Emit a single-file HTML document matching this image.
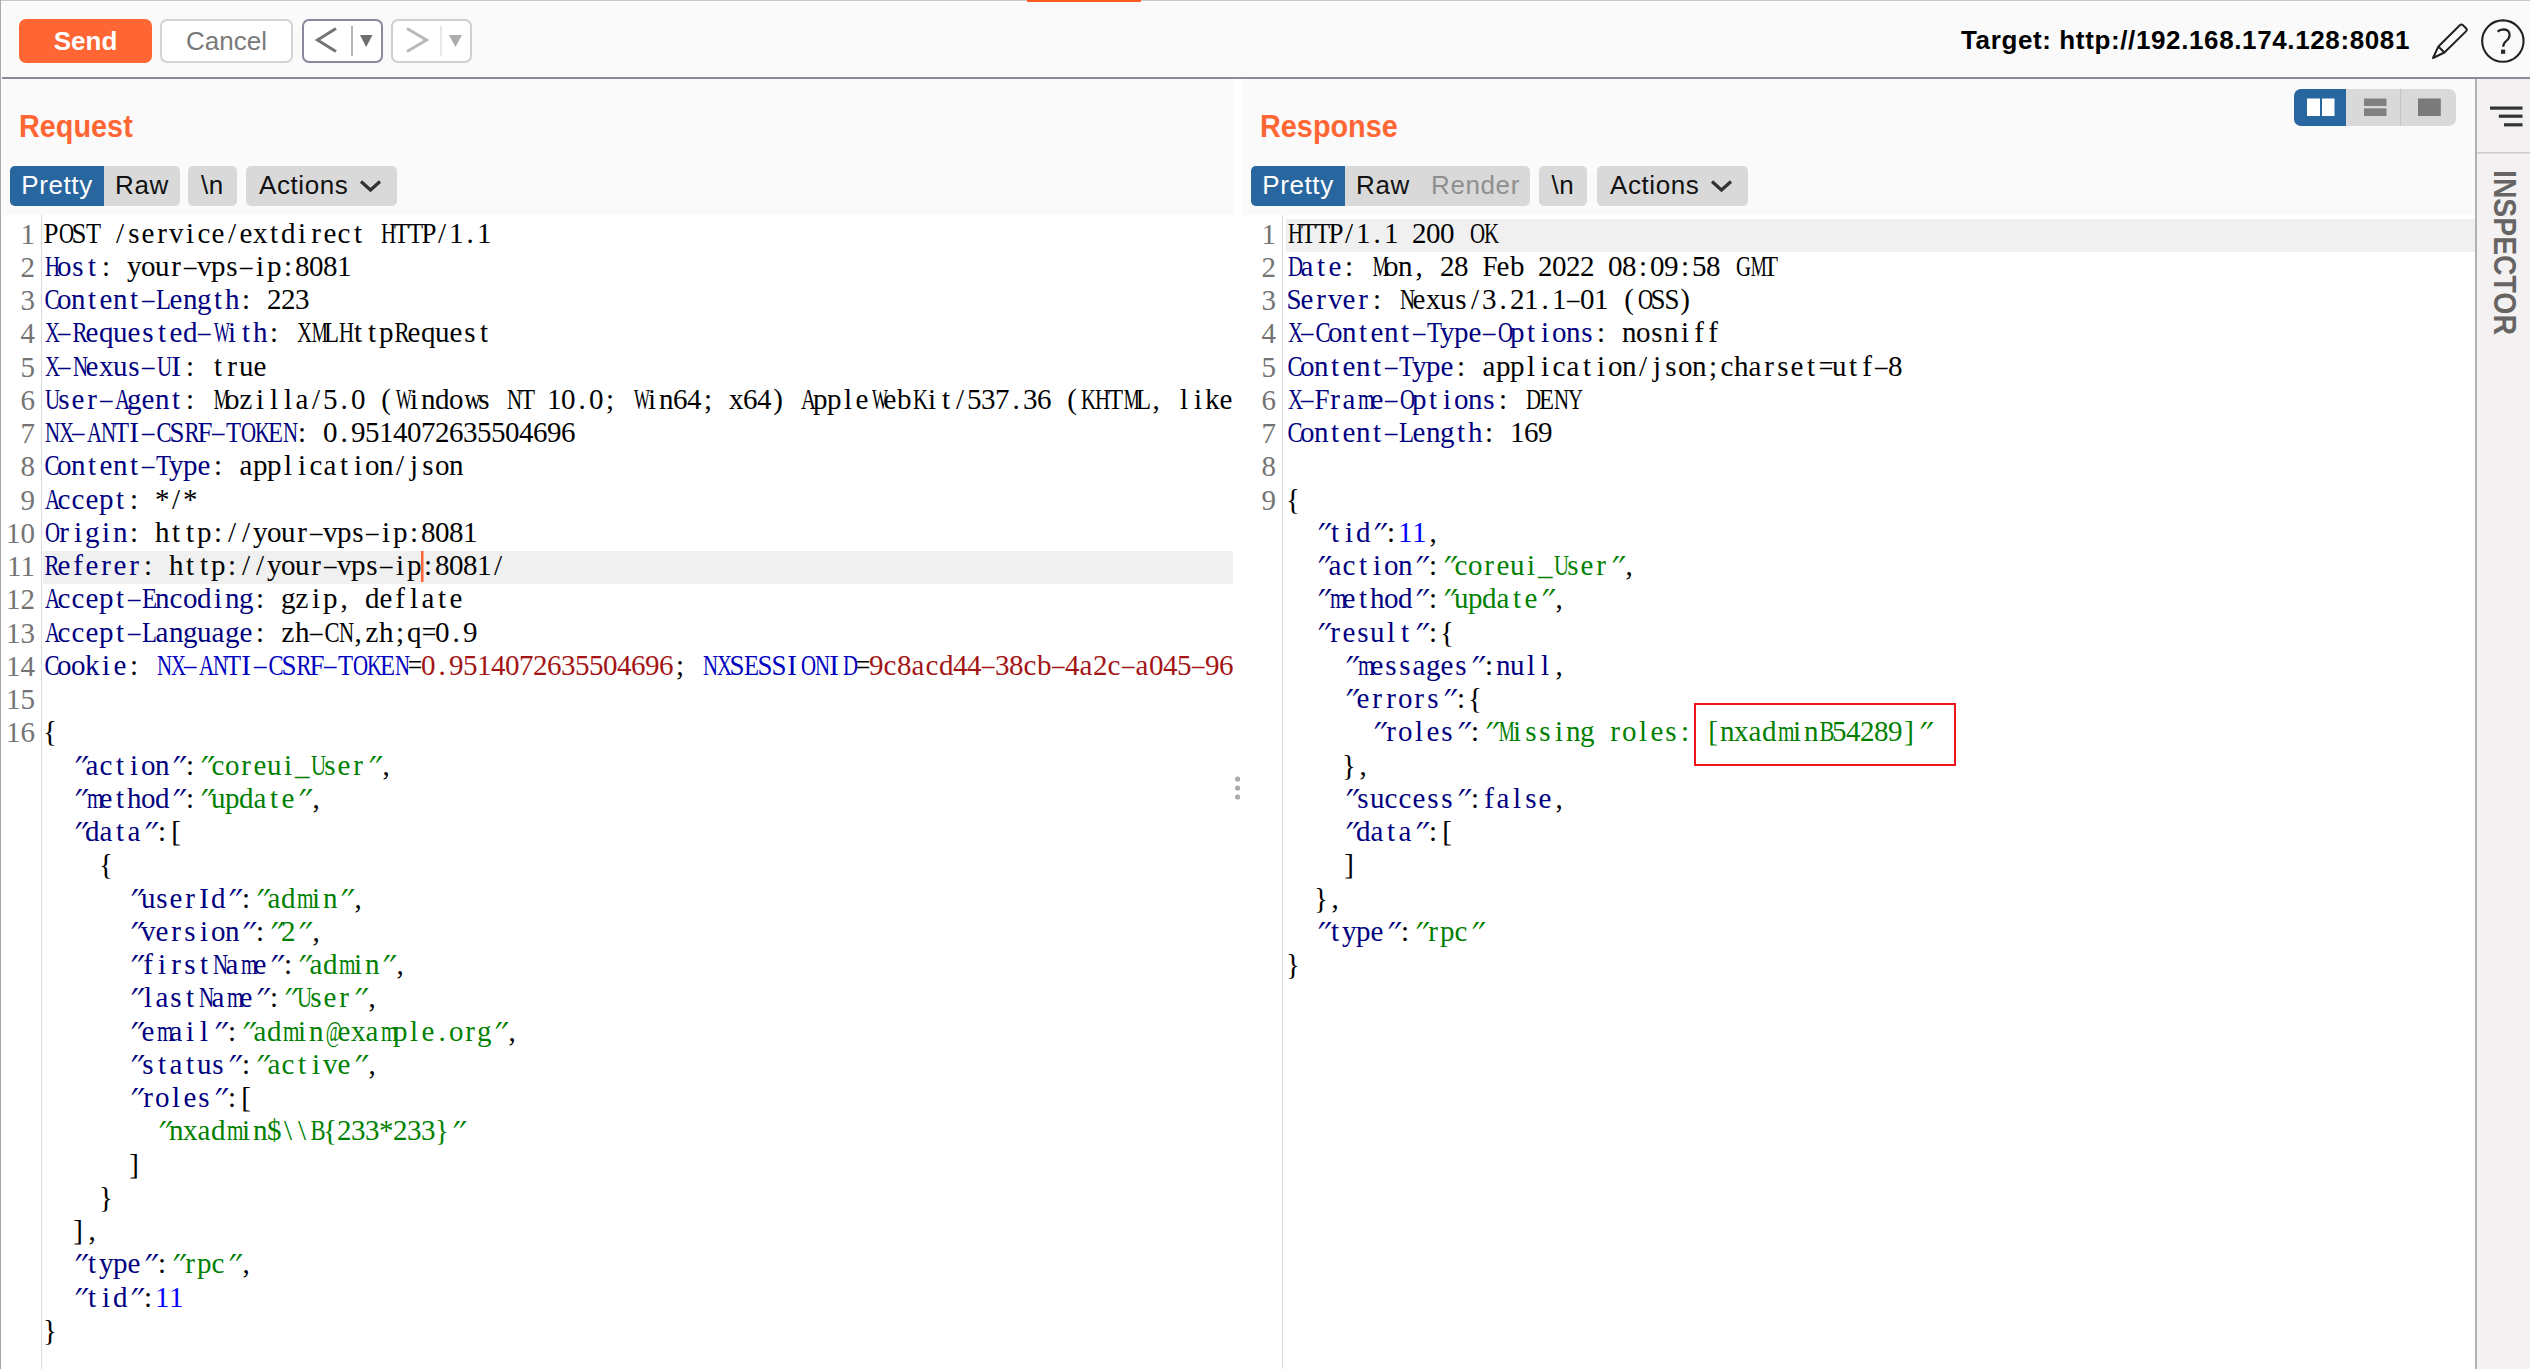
<!DOCTYPE html>
<html><head><meta charset="utf-8">
<style>
*{margin:0;padding:0;box-sizing:border-box}
html,body{width:2530px;height:1369px;overflow:hidden;background:#fafafa;font-family:"Liberation Sans",sans-serif}
.abs{position:absolute}
#topline{position:absolute;left:0;top:0;width:2530px;height:1px;background:#c3c8c8}
#toptab{position:absolute;left:1027px;top:0;width:114px;height:1.5px;background:#ff5a1f}
#leftline{position:absolute;left:0;top:0;width:1px;height:1369px;background:#a9a9a9;z-index:5}
#sep{position:absolute;left:2px;top:77px;width:2528px;height:2px;background:#8c899c}
.btn{position:absolute;border-radius:7px}
#send{left:19px;top:19px;width:133px;height:44px;background:#ff6633;color:#fff;font-weight:bold;font-size:26px;text-align:center;line-height:44px}
#cancel{left:160px;top:19px;width:133px;height:44px;background:#fff;border:2px solid #d3d3d3;color:#7a7a7a;font-size:26px;text-align:center;line-height:40px}
#back{left:302px;top:19px;width:81px;height:44px;background:#fff;border:2px solid #8a879e}
#fwd{left:391px;top:19px;width:81px;height:44px;background:#fff;border:2px solid #cfcfcf}
#target{position:absolute;left:1961px;top:25px;font-size:26px;font-weight:bold;color:#000;white-space:nowrap;letter-spacing:0.62px}
.panel{position:absolute;top:79px;background:#fafafa}
#reqp{left:2px;width:1231px;height:1290px}
#strip{position:absolute;left:1233px;top:79px;width:9px;height:136px;background:#fff}
#respp{left:1242px;width:1233px;height:1290px}
.title{position:absolute;top:108.5px;font-size:31px;font-weight:bold;color:#ff6633;transform-origin:0 0;transform:scaleX(0.93);line-height:36px}
.tabs{position:absolute;top:166px;height:40px;background:#d9d9d9;border-radius:5px;font-size:26px;color:#111;white-space:nowrap}
.tab{position:absolute;top:0;height:40px;line-height:38px;text-align:center;letter-spacing:0.6px}
.tab.act{background:#2866a0;color:#fff;border-radius:5px 0 0 5px}
.editor{position:absolute;top:215px;height:1154px;background:#fff;overflow:hidden}
.gut{position:absolute;top:0;width:1px;height:1154px;background:#dcdcdc}
.ln{position:absolute;left:0;right:0;height:33.25px;white-space:pre}
.ln.hl{background:#f0f0f0}
.t{position:absolute;left:0;top:-2px;font-family:"Liberation Serif",serif;font-size:29px;line-height:33.25px;color:#000;white-space:nowrap}
.t i{display:inline-block;width:14px;text-align:center;font-style:normal;vertical-align:top}
.t i.q{transform:translateX(1.5px) skewX(-22deg) scaleX(1.15)}
.no{position:absolute;width:33px;margin-top:-1px;text-align:right;font-family:"Liberation Serif",serif;font-size:29px;line-height:33.25px;color:#747474}
.h{color:#000080}
.c{color:#0000c0}
.v{color:#a31515}
.s{color:#008000}
.n{color:#0000ff}
#sidebar{position:absolute;left:2474.5px;top:79px;width:55.5px;height:1290px;background:#f3f1f2;border-left:2.5px solid #b5b0b0}
#redbox{position:absolute;left:1694px;top:703px;width:262px;height:63px;border:2.8px solid #f0141e}
</style></head><body>
<div id="topline"></div><div id="leftline"></div><div id="toptab"></div>
<div id="send" class="btn">Send</div>
<div id="cancel" class="btn">Cancel</div>
<div id="back" class="btn"></div>
<div id="fwd" class="btn"></div>
<svg class="abs" style="left:0;top:0" width="2530" height="80" viewBox="0 0 2530 80">
<polyline points="336,28.5 317.5,40 336,51.5" fill="none" stroke="#767676" stroke-width="3"/>
<rect x="351" y="26" width="2" height="30" fill="#b4b4b4"/>
<polygon points="360,35 372.5,35 366.2,47" fill="#6e6e6e"/>
<polyline points="407,28.5 426.5,40 407,51.5" fill="none" stroke="#b8b8b8" stroke-width="3"/>
<rect x="440.5" y="26" width="1" height="30" fill="#cfcfcf"/>
<polygon points="449,35 462,35 455.5,47" fill="#adadad"/>
<path d="M2433 58 L2438.4 46.5 L2459.8 25.2 Q2461.4 23.6 2463 25.2 L2466 28.2 Q2467.6 29.8 2466 31.4 L2444.4 52.5 Z M2438.4 46.5 L2444.4 52.5" fill="none" stroke="#222" stroke-width="2" stroke-linejoin="round"/>
<circle cx="2502.85" cy="41.05" r="20.7" fill="none" stroke="#222" stroke-width="2.1"/>
<path d="M2497.6 31.6 Q2499.8 29.4 2503.8 29.4 Q2509.6 29.8 2509.6 35 Q2509.6 38.3 2506.2 41 Q2503.2 43.6 2503.2 46.8" fill="none" stroke="#222" stroke-width="2.2"/>
<rect x="2501" y="49.6" width="4.2" height="4.2" fill="#2a2a2a"/>
</svg>
<div id="target">Target: http://192.168.174.128:8081</div>
<div id="sep"></div>

<div id="reqp" class="panel"></div>
<div id="strip"></div>
<div id="respp" class="panel"></div>

<div class="title" style="left:19px">Request</div>
<div class="tabs" style="left:10px;width:170px"><div class="tab act" style="left:0;width:94px">Pretty</div><div class="tab" style="left:94px;width:76px">Raw</div></div>
<div class="tabs" style="left:188px;width:49px"><div class="tab" style="left:0;width:49px">\n</div></div>
<div class="tabs" style="left:246px;width:151px"><div class="tab" style="left:13px;width:auto">Actions</div></div>

<div class="title" style="left:1259.5px">Response</div>
<div class="tabs" style="left:1251px;width:279px"><div class="tab act" style="left:0;width:94px">Pretty</div><div class="tab" style="left:94px;width:76px">Raw</div><div class="tab" style="left:170px;width:109px;color:#8f8f8f">Render</div></div>
<div class="tabs" style="left:1539px;width:48px"><div class="tab" style="left:0;width:48px">\n</div></div>
<div class="tabs" style="left:1597px;width:151px"><div class="tab" style="left:13px;width:auto">Actions</div></div>

<div class="editor" style="left:2px;width:1231px">
<div class="gut" style="left:39px"></div>
<div class="abs" style="left:0;top:-215px"><div class="no" style="top:218.50px">1</div>
<div class="no" style="top:251.75px">2</div>
<div class="no" style="top:285.00px">3</div>
<div class="no" style="top:318.25px">4</div>
<div class="no" style="top:351.50px">5</div>
<div class="no" style="top:384.75px">6</div>
<div class="no" style="top:418.00px">7</div>
<div class="no" style="top:451.25px">8</div>
<div class="no" style="top:484.50px">9</div>
<div class="no" style="top:517.75px">10</div>
<div class="no" style="top:551.00px">11</div>
<div class="no" style="top:584.25px">12</div>
<div class="no" style="top:617.50px">13</div>
<div class="no" style="top:650.75px">14</div>
<div class="no" style="top:684.00px">15</div>
<div class="no" style="top:717.25px">16</div></div>
<div class="abs" style="left:41px;top:-215px;width:1190px;height:1369px;overflow:hidden"><div class="ln" style="top:218.50px"><span class="t"><i style="transform:scaleX(0.93)">P</i><i style="transform:scaleX(0.72)">O</i><i style="transform:scaleX(0.93)">S</i><i style="transform:scaleX(0.85)">T</i><i style="width:14px"></i><i>/</i><i>s</i><i>e</i><i>r</i><i>v</i><i>i</i><i>c</i><i>e</i><i>/</i><i>e</i><i>x</i><i>t</i><i>d</i><i>i</i><i>r</i><i>e</i><i>c</i><i>t</i><i style="width:14px"></i><i style="transform:scaleX(0.72)">H</i><i style="transform:scaleX(0.85)">T</i><i style="transform:scaleX(0.85)">T</i><i style="transform:scaleX(0.93)">P</i><i>/</i><i>1</i><i>.</i><i>1</i></span></div>
<div class="ln" style="top:251.75px"><span class="t"><span class="h"><i style="transform:scaleX(0.72)">H</i><i>o</i><i>s</i><i>t</i></span><i>:</i><i style="width:14px"></i><i>y</i><i>o</i><i>u</i><i>r</i><i style="transform:scaleX(0.86)">–</i><i>v</i><i>p</i><i>s</i><i style="transform:scaleX(0.86)">–</i><i>i</i><i>p</i><i>:</i><i>8</i><i>0</i><i>8</i><i>1</i></span></div>
<div class="ln" style="top:285.00px"><span class="t"><span class="h"><i style="transform:scaleX(0.78)">C</i><i>o</i><i>n</i><i>t</i><i>e</i><i>n</i><i>t</i><i style="transform:scaleX(0.86)">–</i><i style="transform:scaleX(0.85)">L</i><i>e</i><i>n</i><i>g</i><i>t</i><i>h</i></span><i>:</i><i style="width:14px"></i><i>2</i><i>2</i><i>3</i></span></div>
<div class="ln" style="top:318.25px"><span class="t"><span class="h"><i style="transform:scaleX(0.72)">X</i><i style="transform:scaleX(0.86)">–</i><i style="transform:scaleX(0.78)">R</i><i>e</i><i>q</i><i>u</i><i>e</i><i>s</i><i>t</i><i>e</i><i>d</i><i style="transform:scaleX(0.86)">–</i><i style="transform:scaleX(0.58)">W</i><i>i</i><i>t</i><i>h</i></span><i>:</i><i style="width:14px"></i><i style="transform:scaleX(0.72)">X</i><i style="transform:scaleX(0.62)">M</i><i style="transform:scaleX(0.85)">L</i><i style="transform:scaleX(0.72)">H</i><i>t</i><i>t</i><i>p</i><i style="transform:scaleX(0.78)">R</i><i>e</i><i>q</i><i>u</i><i>e</i><i>s</i><i>t</i></span></div>
<div class="ln" style="top:351.50px"><span class="t"><span class="h"><i style="transform:scaleX(0.72)">X</i><i style="transform:scaleX(0.86)">–</i><i style="transform:scaleX(0.72)">N</i><i>e</i><i>x</i><i>u</i><i>s</i><i style="transform:scaleX(0.86)">–</i><i style="transform:scaleX(0.72)">U</i><i>I</i></span><i>:</i><i style="width:14px"></i><i>t</i><i>r</i><i>u</i><i>e</i></span></div>
<div class="ln" style="top:384.75px"><span class="t"><span class="h"><i style="transform:scaleX(0.72)">U</i><i>s</i><i>e</i><i>r</i><i style="transform:scaleX(0.86)">–</i><i style="transform:scaleX(0.72)">A</i><i>g</i><i>e</i><i>n</i><i>t</i></span><i>:</i><i style="width:14px"></i><i style="transform:scaleX(0.62)">M</i><i>o</i><i>z</i><i>i</i><i>l</i><i>l</i><i>a</i><i>/</i><i>5</i><i>.</i><i>0</i><i style="width:14px"></i><i>(</i><i style="transform:scaleX(0.58)">W</i><i>i</i><i>n</i><i>d</i><i>o</i><i style="transform:scaleX(0.79)">w</i><i>s</i><i style="width:14px"></i><i style="transform:scaleX(0.72)">N</i><i style="transform:scaleX(0.85)">T</i><i style="width:14px"></i><i>1</i><i>0</i><i>.</i><i>0</i><i>;</i><i style="width:14px"></i><i style="transform:scaleX(0.58)">W</i><i>i</i><i>n</i><i>6</i><i>4</i><i>;</i><i style="width:14px"></i><i>x</i><i>6</i><i>4</i><i>)</i><i style="width:14px"></i><i style="transform:scaleX(0.72)">A</i><i>p</i><i>p</i><i>l</i><i>e</i><i style="transform:scaleX(0.58)">W</i><i>e</i><i>b</i><i style="transform:scaleX(0.72)">K</i><i>i</i><i>t</i><i>/</i><i>5</i><i>3</i><i>7</i><i>.</i><i>3</i><i>6</i><i style="width:14px"></i><i>(</i><i style="transform:scaleX(0.72)">K</i><i style="transform:scaleX(0.72)">H</i><i style="transform:scaleX(0.85)">T</i><i style="transform:scaleX(0.62)">M</i><i style="transform:scaleX(0.85)">L</i><i>,</i><i style="width:14px"></i><i>l</i><i>i</i><i>k</i><i>e</i><i style="width:14px"></i><i style="transform:scaleX(0.72)">G</i><i>e</i><i>c</i><i>k</i><i>o</i><i>)</i><i style="width:14px"></i><i style="transform:scaleX(0.78)">C</i><i>h</i><i>r</i><i>o</i><i style="transform:scaleX(0.73)">m</i><i>e</i><i>/</i><i>9</i><i>8</i><i>.</i><i>0</i><i>.</i><i>4</i><i>7</i><i>5</i><i>8</i><i>.</i><i>1</i><i>0</i><i>2</i><i style="width:14px"></i><i style="transform:scaleX(0.93)">S</i><i>a</i><i>f</i><i>a</i><i>r</i><i>i</i><i>/</i><i>5</i><i>3</i><i>7</i><i>.</i><i>3</i><i>6</i></span></div>
<div class="ln" style="top:418.00px"><span class="t"><span class="h"><i style="transform:scaleX(0.72)">N</i><i style="transform:scaleX(0.72)">X</i><i style="transform:scaleX(0.86)">–</i><i style="transform:scaleX(0.72)">A</i><i style="transform:scaleX(0.72)">N</i><i style="transform:scaleX(0.85)">T</i><i>I</i><i style="transform:scaleX(0.86)">–</i><i style="transform:scaleX(0.78)">C</i><i style="transform:scaleX(0.93)">S</i><i style="transform:scaleX(0.78)">R</i><i style="transform:scaleX(0.93)">F</i><i style="transform:scaleX(0.86)">–</i><i style="transform:scaleX(0.85)">T</i><i style="transform:scaleX(0.72)">O</i><i style="transform:scaleX(0.72)">K</i><i style="transform:scaleX(0.85)">E</i><i style="transform:scaleX(0.72)">N</i></span><i>:</i><i style="width:14px"></i><i>0</i><i>.</i><i>9</i><i>5</i><i>1</i><i>4</i><i>0</i><i>7</i><i>2</i><i>6</i><i>3</i><i>5</i><i>5</i><i>0</i><i>4</i><i>6</i><i>9</i><i>6</i></span></div>
<div class="ln" style="top:451.25px"><span class="t"><span class="h"><i style="transform:scaleX(0.78)">C</i><i>o</i><i>n</i><i>t</i><i>e</i><i>n</i><i>t</i><i style="transform:scaleX(0.86)">–</i><i style="transform:scaleX(0.85)">T</i><i>y</i><i>p</i><i>e</i></span><i>:</i><i style="width:14px"></i><i>a</i><i>p</i><i>p</i><i>l</i><i>i</i><i>c</i><i>a</i><i>t</i><i>i</i><i>o</i><i>n</i><i>/</i><i>j</i><i>s</i><i>o</i><i>n</i></span></div>
<div class="ln" style="top:484.50px"><span class="t"><span class="h"><i style="transform:scaleX(0.72)">A</i><i>c</i><i>c</i><i>e</i><i>p</i><i>t</i></span><i>:</i><i style="width:14px"></i><i>*</i><i>/</i><i>*</i></span></div>
<div class="ln" style="top:517.75px"><span class="t"><span class="h"><i style="transform:scaleX(0.72)">O</i><i>r</i><i>i</i><i>g</i><i>i</i><i>n</i></span><i>:</i><i style="width:14px"></i><i>h</i><i>t</i><i>t</i><i>p</i><i>:</i><i>/</i><i>/</i><i>y</i><i>o</i><i>u</i><i>r</i><i style="transform:scaleX(0.86)">–</i><i>v</i><i>p</i><i>s</i><i style="transform:scaleX(0.86)">–</i><i>i</i><i>p</i><i>:</i><i>8</i><i>0</i><i>8</i><i>1</i></span></div>
<div class="ln hl" style="top:551.00px"><span class="t"><span class="h"><i style="transform:scaleX(0.78)">R</i><i>e</i><i>f</i><i>e</i><i>r</i><i>e</i><i>r</i></span><i>:</i><i style="width:14px"></i><i>h</i><i>t</i><i>t</i><i>p</i><i>:</i><i>/</i><i>/</i><i>y</i><i>o</i><i>u</i><i>r</i><i style="transform:scaleX(0.86)">–</i><i>v</i><i>p</i><i>s</i><i style="transform:scaleX(0.86)">–</i><i>i</i><i>p</i><i>:</i><i>8</i><i>0</i><i>8</i><i>1</i><i>/</i></span></div>
<div class="ln" style="top:584.25px"><span class="t"><span class="h"><i style="transform:scaleX(0.72)">A</i><i>c</i><i>c</i><i>e</i><i>p</i><i>t</i><i style="transform:scaleX(0.86)">–</i><i style="transform:scaleX(0.85)">E</i><i>n</i><i>c</i><i>o</i><i>d</i><i>i</i><i>n</i><i>g</i></span><i>:</i><i style="width:14px"></i><i>g</i><i>z</i><i>i</i><i>p</i><i>,</i><i style="width:14px"></i><i>d</i><i>e</i><i>f</i><i>l</i><i>a</i><i>t</i><i>e</i></span></div>
<div class="ln" style="top:617.50px"><span class="t"><span class="h"><i style="transform:scaleX(0.72)">A</i><i>c</i><i>c</i><i>e</i><i>p</i><i>t</i><i style="transform:scaleX(0.86)">–</i><i style="transform:scaleX(0.85)">L</i><i>a</i><i>n</i><i>g</i><i>u</i><i>a</i><i>g</i><i>e</i></span><i>:</i><i style="width:14px"></i><i>z</i><i>h</i><i style="transform:scaleX(0.86)">–</i><i style="transform:scaleX(0.78)">C</i><i style="transform:scaleX(0.72)">N</i><i>,</i><i>z</i><i>h</i><i>;</i><i>q</i><i style="transform:scaleX(0.89)">=</i><i>0</i><i>.</i><i>9</i></span></div>
<div class="ln" style="top:650.75px"><span class="t"><span class="h"><i style="transform:scaleX(0.78)">C</i><i>o</i><i>o</i><i>k</i><i>i</i><i>e</i></span><i>:</i><i style="width:14px"></i><span class="c"><i style="transform:scaleX(0.72)">N</i><i style="transform:scaleX(0.72)">X</i><i style="transform:scaleX(0.86)">–</i><i style="transform:scaleX(0.72)">A</i><i style="transform:scaleX(0.72)">N</i><i style="transform:scaleX(0.85)">T</i><i>I</i><i style="transform:scaleX(0.86)">–</i><i style="transform:scaleX(0.78)">C</i><i style="transform:scaleX(0.93)">S</i><i style="transform:scaleX(0.78)">R</i><i style="transform:scaleX(0.93)">F</i><i style="transform:scaleX(0.86)">–</i><i style="transform:scaleX(0.85)">T</i><i style="transform:scaleX(0.72)">O</i><i style="transform:scaleX(0.72)">K</i><i style="transform:scaleX(0.85)">E</i><i style="transform:scaleX(0.72)">N</i></span><i style="transform:scaleX(0.89)">=</i><span class="v"><i>0</i><i>.</i><i>9</i><i>5</i><i>1</i><i>4</i><i>0</i><i>7</i><i>2</i><i>6</i><i>3</i><i>5</i><i>5</i><i>0</i><i>4</i><i>6</i><i>9</i><i>6</i></span><i>;</i><i style="width:14px"></i><span class="c"><i style="transform:scaleX(0.72)">N</i><i style="transform:scaleX(0.72)">X</i><i style="transform:scaleX(0.93)">S</i><i style="transform:scaleX(0.85)">E</i><i style="transform:scaleX(0.93)">S</i><i style="transform:scaleX(0.93)">S</i><i>I</i><i style="transform:scaleX(0.72)">O</i><i style="transform:scaleX(0.72)">N</i><i>I</i><i style="transform:scaleX(0.72)">D</i></span><i style="transform:scaleX(0.89)">=</i><span class="v"><i>9</i><i>c</i><i>8</i><i>a</i><i>c</i><i>d</i><i>4</i><i>4</i><i style="transform:scaleX(0.86)">–</i><i>3</i><i>8</i><i>c</i><i>b</i><i style="transform:scaleX(0.86)">–</i><i>4</i><i>a</i><i>2</i><i>c</i><i style="transform:scaleX(0.86)">–</i><i>a</i><i>0</i><i>4</i><i>5</i><i style="transform:scaleX(0.86)">–</i><i>9</i><i>6</i><i>a</i><i>2</i><i>f</i><i>c</i><i>b</i><i>b</i><i>a</i><i>2</i><i>b</i><i>1</i></span></span></div>
<div class="ln" style="top:684.00px"><span class="t"></span></div>
<div class="ln" style="top:717.25px"><span class="t"><i>{</i></span></div>
<div class="ln" style="top:750.50px"><span class="t"><i style="width:28px"></i><span class="h"><i class="q">″</i><i>a</i><i>c</i><i>t</i><i>i</i><i>o</i><i>n</i><i class="q">″</i></span><i>:</i><span class="s"><i class="q">″</i><i>c</i><i>o</i><i>r</i><i>e</i><i>u</i><i>i</i><i>_</i><i style="transform:scaleX(0.72)">U</i><i>s</i><i>e</i><i>r</i><i class="q">″</i></span><i>,</i></span></div>
<div class="ln" style="top:783.75px"><span class="t"><i style="width:28px"></i><span class="h"><i class="q">″</i><i style="transform:scaleX(0.73)">m</i><i>e</i><i>t</i><i>h</i><i>o</i><i>d</i><i class="q">″</i></span><i>:</i><span class="s"><i class="q">″</i><i>u</i><i>p</i><i>d</i><i>a</i><i>t</i><i>e</i><i class="q">″</i></span><i>,</i></span></div>
<div class="ln" style="top:817.00px"><span class="t"><i style="width:28px"></i><span class="h"><i class="q">″</i><i>d</i><i>a</i><i>t</i><i>a</i><i class="q">″</i></span><i>:</i><i>[</i></span></div>
<div class="ln" style="top:850.25px"><span class="t"><i style="width:56px"></i><i>{</i></span></div>
<div class="ln" style="top:883.50px"><span class="t"><i style="width:84px"></i><span class="h"><i class="q">″</i><i>u</i><i>s</i><i>e</i><i>r</i><i>I</i><i>d</i><i class="q">″</i></span><i>:</i><span class="s"><i class="q">″</i><i>a</i><i>d</i><i style="transform:scaleX(0.73)">m</i><i>i</i><i>n</i><i class="q">″</i></span><i>,</i></span></div>
<div class="ln" style="top:916.75px"><span class="t"><i style="width:84px"></i><span class="h"><i class="q">″</i><i>v</i><i>e</i><i>r</i><i>s</i><i>i</i><i>o</i><i>n</i><i class="q">″</i></span><i>:</i><span class="s"><i class="q">″</i><i>2</i><i class="q">″</i></span><i>,</i></span></div>
<div class="ln" style="top:950.00px"><span class="t"><i style="width:84px"></i><span class="h"><i class="q">″</i><i>f</i><i>i</i><i>r</i><i>s</i><i>t</i><i style="transform:scaleX(0.72)">N</i><i>a</i><i style="transform:scaleX(0.73)">m</i><i>e</i><i class="q">″</i></span><i>:</i><span class="s"><i class="q">″</i><i>a</i><i>d</i><i style="transform:scaleX(0.73)">m</i><i>i</i><i>n</i><i class="q">″</i></span><i>,</i></span></div>
<div class="ln" style="top:983.25px"><span class="t"><i style="width:84px"></i><span class="h"><i class="q">″</i><i>l</i><i>a</i><i>s</i><i>t</i><i style="transform:scaleX(0.72)">N</i><i>a</i><i style="transform:scaleX(0.73)">m</i><i>e</i><i class="q">″</i></span><i>:</i><span class="s"><i class="q">″</i><i style="transform:scaleX(0.72)">U</i><i>s</i><i>e</i><i>r</i><i class="q">″</i></span><i>,</i></span></div>
<div class="ln" style="top:1016.50px"><span class="t"><i style="width:84px"></i><span class="h"><i class="q">″</i><i>e</i><i style="transform:scaleX(0.73)">m</i><i>a</i><i>i</i><i>l</i><i class="q">″</i></span><i>:</i><span class="s"><i class="q">″</i><i>a</i><i>d</i><i style="transform:scaleX(0.73)">m</i><i>i</i><i>n</i><i style="transform:scaleX(0.60)">@</i><i>e</i><i>x</i><i>a</i><i style="transform:scaleX(0.73)">m</i><i>p</i><i>l</i><i>e</i><i>.</i><i>o</i><i>r</i><i>g</i><i class="q">″</i></span><i>,</i></span></div>
<div class="ln" style="top:1049.75px"><span class="t"><i style="width:84px"></i><span class="h"><i class="q">″</i><i>s</i><i>t</i><i>a</i><i>t</i><i>u</i><i>s</i><i class="q">″</i></span><i>:</i><span class="s"><i class="q">″</i><i>a</i><i>c</i><i>t</i><i>i</i><i>v</i><i>e</i><i class="q">″</i></span><i>,</i></span></div>
<div class="ln" style="top:1083.00px"><span class="t"><i style="width:84px"></i><span class="h"><i class="q">″</i><i>r</i><i>o</i><i>l</i><i>e</i><i>s</i><i class="q">″</i></span><i>:</i><i>[</i></span></div>
<div class="ln" style="top:1116.25px"><span class="t"><i style="width:112px"></i><span class="s"><i class="q">″</i><i>n</i><i>x</i><i>a</i><i>d</i><i style="transform:scaleX(0.73)">m</i><i>i</i><i>n</i><i>$</i><i>\</i><i>\</i><i style="transform:scaleX(0.78)">B</i><i>{</i><i>2</i><i>3</i><i>3</i><i>*</i><i>2</i><i>3</i><i>3</i><i>}</i><i class="q">″</i></span></span></div>
<div class="ln" style="top:1149.50px"><span class="t"><i style="width:84px"></i><i>]</i></span></div>
<div class="ln" style="top:1182.75px"><span class="t"><i style="width:56px"></i><i>}</i></span></div>
<div class="ln" style="top:1216.00px"><span class="t"><i style="width:28px"></i><i>]</i><i>,</i></span></div>
<div class="ln" style="top:1249.25px"><span class="t"><i style="width:28px"></i><span class="h"><i class="q">″</i><i>t</i><i>y</i><i>p</i><i>e</i><i class="q">″</i></span><i>:</i><span class="s"><i class="q">″</i><i>r</i><i>p</i><i>c</i><i class="q">″</i></span><i>,</i></span></div>
<div class="ln" style="top:1282.50px"><span class="t"><i style="width:28px"></i><span class="h"><i class="q">″</i><i>t</i><i>i</i><i>d</i><i class="q">″</i></span><i>:</i><span class="n"><i>1</i><i>1</i></span></span></div>
<div class="ln" style="top:1315.75px"><span class="t"><i>}</i></span></div></div>
</div>
<div class="editor" style="left:1233px;width:1242px">
<div class="gut" style="left:49px"></div>
<div class="abs" style="left:10px;top:-215px"><div class="no" style="top:218.50px">1</div>
<div class="no" style="top:251.75px">2</div>
<div class="no" style="top:285.00px">3</div>
<div class="no" style="top:318.25px">4</div>
<div class="no" style="top:351.50px">5</div>
<div class="no" style="top:384.75px">6</div>
<div class="no" style="top:418.00px">7</div>
<div class="no" style="top:451.25px">8</div>
<div class="no" style="top:484.50px">9</div></div>
<div class="abs" style="left:53px;top:-215px;width:1189px;height:1369px;overflow:hidden"><div class="ln hl" style="top:218.50px"><span class="t"><i style="transform:scaleX(0.72)">H</i><i style="transform:scaleX(0.85)">T</i><i style="transform:scaleX(0.85)">T</i><i style="transform:scaleX(0.93)">P</i><i>/</i><i>1</i><i>.</i><i>1</i><i style="width:14px"></i><i>2</i><i>0</i><i>0</i><i style="width:14px"></i><i style="transform:scaleX(0.72)">O</i><i style="transform:scaleX(0.72)">K</i></span></div>
<div class="ln" style="top:251.75px"><span class="t"><span class="h"><i style="transform:scaleX(0.72)">D</i><i>a</i><i>t</i><i>e</i></span><i>:</i><i style="width:14px"></i><i style="transform:scaleX(0.62)">M</i><i>o</i><i>n</i><i>,</i><i style="width:14px"></i><i>2</i><i>8</i><i style="width:14px"></i><i style="transform:scaleX(0.93)">F</i><i>e</i><i>b</i><i style="width:14px"></i><i>2</i><i>0</i><i>2</i><i>2</i><i style="width:14px"></i><i>0</i><i>8</i><i>:</i><i>0</i><i>9</i><i>:</i><i>5</i><i>8</i><i style="width:14px"></i><i style="transform:scaleX(0.72)">G</i><i style="transform:scaleX(0.62)">M</i><i style="transform:scaleX(0.85)">T</i></span></div>
<div class="ln" style="top:285.00px"><span class="t"><span class="h"><i style="transform:scaleX(0.93)">S</i><i>e</i><i>r</i><i>v</i><i>e</i><i>r</i></span><i>:</i><i style="width:14px"></i><i style="transform:scaleX(0.72)">N</i><i>e</i><i>x</i><i>u</i><i>s</i><i>/</i><i>3</i><i>.</i><i>2</i><i>1</i><i>.</i><i>1</i><i style="transform:scaleX(0.86)">–</i><i>0</i><i>1</i><i style="width:14px"></i><i>(</i><i style="transform:scaleX(0.72)">O</i><i style="transform:scaleX(0.93)">S</i><i style="transform:scaleX(0.93)">S</i><i>)</i></span></div>
<div class="ln" style="top:318.25px"><span class="t"><span class="h"><i style="transform:scaleX(0.72)">X</i><i style="transform:scaleX(0.86)">–</i><i style="transform:scaleX(0.78)">C</i><i>o</i><i>n</i><i>t</i><i>e</i><i>n</i><i>t</i><i style="transform:scaleX(0.86)">–</i><i style="transform:scaleX(0.85)">T</i><i>y</i><i>p</i><i>e</i><i style="transform:scaleX(0.86)">–</i><i style="transform:scaleX(0.72)">O</i><i>p</i><i>t</i><i>i</i><i>o</i><i>n</i><i>s</i></span><i>:</i><i style="width:14px"></i><i>n</i><i>o</i><i>s</i><i>n</i><i>i</i><i>f</i><i>f</i></span></div>
<div class="ln" style="top:351.50px"><span class="t"><span class="h"><i style="transform:scaleX(0.78)">C</i><i>o</i><i>n</i><i>t</i><i>e</i><i>n</i><i>t</i><i style="transform:scaleX(0.86)">–</i><i style="transform:scaleX(0.85)">T</i><i>y</i><i>p</i><i>e</i></span><i>:</i><i style="width:14px"></i><i>a</i><i>p</i><i>p</i><i>l</i><i>i</i><i>c</i><i>a</i><i>t</i><i>i</i><i>o</i><i>n</i><i>/</i><i>j</i><i>s</i><i>o</i><i>n</i><i>;</i><i>c</i><i>h</i><i>a</i><i>r</i><i>s</i><i>e</i><i>t</i><i style="transform:scaleX(0.89)">=</i><i>u</i><i>t</i><i>f</i><i style="transform:scaleX(0.86)">–</i><i>8</i></span></div>
<div class="ln" style="top:384.75px"><span class="t"><span class="h"><i style="transform:scaleX(0.72)">X</i><i style="transform:scaleX(0.86)">–</i><i style="transform:scaleX(0.93)">F</i><i>r</i><i>a</i><i style="transform:scaleX(0.73)">m</i><i>e</i><i style="transform:scaleX(0.86)">–</i><i style="transform:scaleX(0.72)">O</i><i>p</i><i>t</i><i>i</i><i>o</i><i>n</i><i>s</i></span><i>:</i><i style="width:14px"></i><i style="transform:scaleX(0.72)">D</i><i style="transform:scaleX(0.85)">E</i><i style="transform:scaleX(0.72)">N</i><i style="transform:scaleX(0.72)">Y</i></span></div>
<div class="ln" style="top:418.00px"><span class="t"><span class="h"><i style="transform:scaleX(0.78)">C</i><i>o</i><i>n</i><i>t</i><i>e</i><i>n</i><i>t</i><i style="transform:scaleX(0.86)">–</i><i style="transform:scaleX(0.85)">L</i><i>e</i><i>n</i><i>g</i><i>t</i><i>h</i></span><i>:</i><i style="width:14px"></i><i>1</i><i>6</i><i>9</i></span></div>
<div class="ln" style="top:451.25px"><span class="t"></span></div>
<div class="ln" style="top:484.50px"><span class="t"><i>{</i></span></div>
<div class="ln" style="top:517.75px"><span class="t"><i style="width:28px"></i><span class="h"><i class="q">″</i><i>t</i><i>i</i><i>d</i><i class="q">″</i></span><i>:</i><span class="n"><i>1</i><i>1</i></span><i>,</i></span></div>
<div class="ln" style="top:551.00px"><span class="t"><i style="width:28px"></i><span class="h"><i class="q">″</i><i>a</i><i>c</i><i>t</i><i>i</i><i>o</i><i>n</i><i class="q">″</i></span><i>:</i><span class="s"><i class="q">″</i><i>c</i><i>o</i><i>r</i><i>e</i><i>u</i><i>i</i><i>_</i><i style="transform:scaleX(0.72)">U</i><i>s</i><i>e</i><i>r</i><i class="q">″</i></span><i>,</i></span></div>
<div class="ln" style="top:584.25px"><span class="t"><i style="width:28px"></i><span class="h"><i class="q">″</i><i style="transform:scaleX(0.73)">m</i><i>e</i><i>t</i><i>h</i><i>o</i><i>d</i><i class="q">″</i></span><i>:</i><span class="s"><i class="q">″</i><i>u</i><i>p</i><i>d</i><i>a</i><i>t</i><i>e</i><i class="q">″</i></span><i>,</i></span></div>
<div class="ln" style="top:617.50px"><span class="t"><i style="width:28px"></i><span class="h"><i class="q">″</i><i>r</i><i>e</i><i>s</i><i>u</i><i>l</i><i>t</i><i class="q">″</i></span><i>:</i><i>{</i></span></div>
<div class="ln" style="top:650.75px"><span class="t"><i style="width:56px"></i><span class="h"><i class="q">″</i><i style="transform:scaleX(0.73)">m</i><i>e</i><i>s</i><i>s</i><i>a</i><i>g</i><i>e</i><i>s</i><i class="q">″</i></span><i>:</i><span class="h"><i>n</i><i>u</i><i>l</i><i>l</i></span><i>,</i></span></div>
<div class="ln" style="top:684.00px"><span class="t"><i style="width:56px"></i><span class="h"><i class="q">″</i><i>e</i><i>r</i><i>r</i><i>o</i><i>r</i><i>s</i><i class="q">″</i></span><i>:</i><i>{</i></span></div>
<div class="ln" style="top:717.25px"><span class="t"><i style="width:84px"></i><span class="h"><i class="q">″</i><i>r</i><i>o</i><i>l</i><i>e</i><i>s</i><i class="q">″</i></span><i>:</i><span class="s"><i class="q">″</i><i style="transform:scaleX(0.62)">M</i><i>i</i><i>s</i><i>s</i><i>i</i><i>n</i><i>g</i><i style="width:14px"></i><i>r</i><i>o</i><i>l</i><i>e</i><i>s</i><i>:</i><i style="width:14px"></i><i>[</i><i>n</i><i>x</i><i>a</i><i>d</i><i style="transform:scaleX(0.73)">m</i><i>i</i><i>n</i><i style="transform:scaleX(0.78)">B</i><i>5</i><i>4</i><i>2</i><i>8</i><i>9</i><i>]</i><i class="q">″</i></span></span></div>
<div class="ln" style="top:750.50px"><span class="t"><i style="width:56px"></i><i>}</i><i>,</i></span></div>
<div class="ln" style="top:783.75px"><span class="t"><i style="width:56px"></i><span class="h"><i class="q">″</i><i>s</i><i>u</i><i>c</i><i>c</i><i>e</i><i>s</i><i>s</i><i class="q">″</i></span><i>:</i><span class="h"><i>f</i><i>a</i><i>l</i><i>s</i><i>e</i></span><i>,</i></span></div>
<div class="ln" style="top:817.00px"><span class="t"><i style="width:56px"></i><span class="h"><i class="q">″</i><i>d</i><i>a</i><i>t</i><i>a</i><i class="q">″</i></span><i>:</i><i>[</i></span></div>
<div class="ln" style="top:850.25px"><span class="t"><i style="width:56px"></i><i>]</i></span></div>
<div class="ln" style="top:883.50px"><span class="t"><i style="width:28px"></i><i>}</i><i>,</i></span></div>
<div class="ln" style="top:916.75px"><span class="t"><i style="width:28px"></i><span class="h"><i class="q">″</i><i>t</i><i>y</i><i>p</i><i>e</i><i class="q">″</i></span><i>:</i><span class="s"><i class="q">″</i><i>r</i><i>p</i><i>c</i><i class="q">″</i></span></span></div>
<div class="ln" style="top:950.00px"><span class="t"><i>}</i></span></div></div>
</div>

<div id="redbox"></div>
<div id="sidebar"></div>
<div class="abs" style="left:2294px;top:89px;width:162px;height:37px;background:#d9d9d9;border-radius:7px;overflow:hidden">
<div class="abs" style="left:0;top:0;width:52px;height:37px;background:#2866a0"></div>
<div class="abs" style="left:106px;top:0;width:1px;height:37px;background:#c4c4c4"></div>
</div>
<svg class="abs" style="left:2280px;top:80px" width="250" height="300" viewBox="2280 80 250 300">
<rect x="2307" y="98.5" width="13" height="17.5" fill="#fff"/>
<rect x="2322" y="98.5" width="12.5" height="17.5" fill="#fff"/>
<rect x="2364" y="98.5" width="22.5" height="7.5" fill="#808080"/>
<rect x="2364" y="108.3" width="22.5" height="7.7" fill="#808080"/>
<rect x="2418" y="98.5" width="22.8" height="17.5" fill="#7a7a7a"/>
<rect x="2490" y="106.5" width="32.5" height="3.2" fill="#333"/>
<rect x="2498.8" y="114.6" width="23.7" height="3.2" fill="#333"/>
<rect x="2504" y="123.2" width="18.5" height="3.2" fill="#333"/>
<rect x="2477" y="152" width="53" height="1.5" fill="#cfcccc"/>
</svg>
<div class="abs" style="left:2520px;top:170.3px;transform-origin:0 0;transform:rotate(90deg) scaleX(0.90);font-size:31.5px;font-weight:bold;color:#676464;line-height:1;white-space:nowrap">INSPECTOR</div>
<svg class="abs" style="left:0;top:150px" width="1800" height="700" viewBox="0 150 1800 700">
<polyline points="361,181.5 370.5,190 380,181.5" fill="none" stroke="#333" stroke-width="3.2"/>
<polyline points="1712,181.5 1721.5,190 1731,181.5" fill="none" stroke="#333" stroke-width="3.2"/>
<circle cx="1237.6" cy="779" r="2.6" fill="#aaa"/>
<circle cx="1237.6" cy="788" r="2.6" fill="#aaa"/>
<circle cx="1237.6" cy="797" r="2.6" fill="#aaa"/>
<rect x="421" y="551" width="2.5" height="31" fill="#ff6633"/>
</svg>
</body></html>
